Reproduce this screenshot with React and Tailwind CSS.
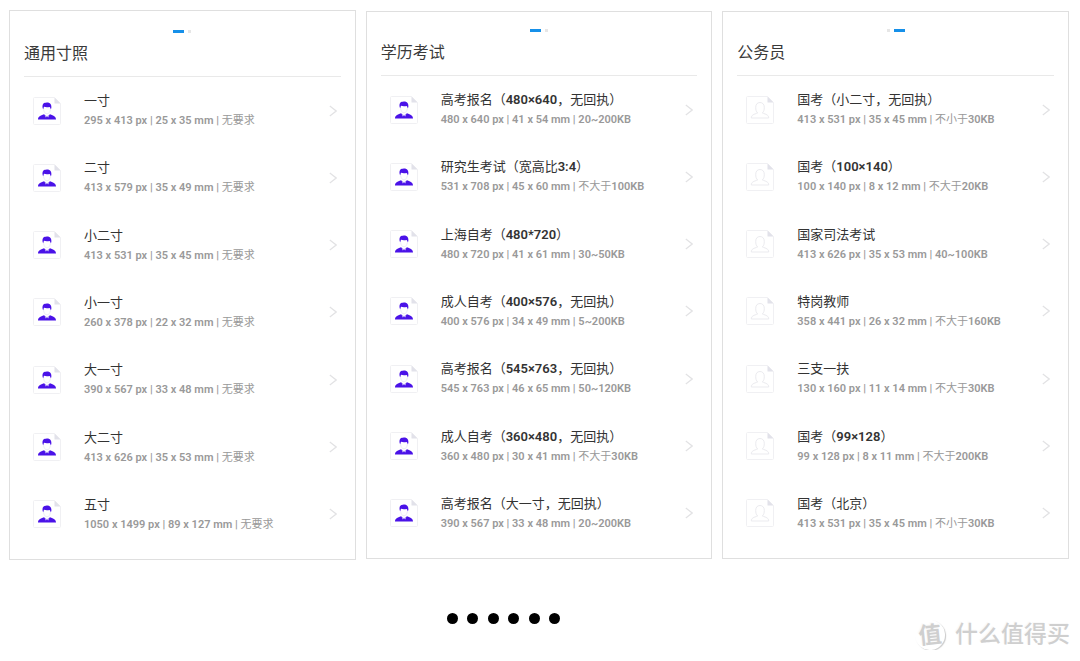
const GENERAL = [
  ["一寸", "295 x 413 px | 25 x 35 mm | 无要求"],
  ["二寸", "413 x 579 px | 35 x 49 mm | 无要求"],
  ["小二寸", "413 x 531 px | 35 x 45 mm | 无要求"],
  ["小一寸", "260 x 378 px | 22 x 32 mm | 无要求"],
  ["大一寸", "390 x 567 px | 33 x 48 mm | 无要求"],
  ["大二寸", "413 x 626 px | 35 x 53 mm | 无要求"],
  ["五寸", "1050 x 1499 px | 89 x 127 mm | 无要求"],
];

const EDUCATION = [
  ["高考报名（480×640，无回执）", "480 x 640 px | 41 x 54 mm | 20~200KB"],
  ["研究生考试（宽高比3:4）", "531 x 708 px | 45 x 60 mm | 不大于100KB"],
  ["上海自考（480*720）", "480 x 720 px | 41 x 61 mm | 30~50KB"],
  ["成人自考（400×576，无回执）", "400 x 576 px | 34 x 49 mm | 5~200KB"],
  ["高考报名（545×763，无回执）", "545 x 763 px | 46 x 65 mm | 50~120KB"],
  ["成人自考（360×480，无回执）", "360 x 480 px | 30 x 41 mm | 不大于30KB"],
  ["高考报名（大一寸，无回执）", "390 x 567 px | 33 x 48 mm | 20~200KB"],
];

const CIVIL = [
  ["国考（小二寸，无回执）", "413 x 531 px | 35 x 45 mm | 不小于30KB"],
  ["国考（100×140）", "100 x 140 px | 8 x 12 mm | 不大于20KB"],
  ["国家司法考试", "413 x 626 px | 35 x 53 mm | 40~100KB"],
  ["特岗教师", "358 x 441 px | 26 x 32 mm | 不大于160KB"],
  ["三支一扶", "130 x 160 px | 11 x 14 mm | 不大于30KB"],
  ["国考（99×128）", "99 x 128 px | 8 x 11 mm | 不大于200KB"],
  ["国考（北京）", "413 x 531 px | 35 x 45 mm | 不小于30KB"],
];

// Latin letters and figures are heavier than the Chinese text around them.
function Mixed({ text, weight }) {
  return text
    .split(/([0-9A-Za-z×:*~|]+)/)
    .map((part, i) => (i % 2 ? <span key={i} className={weight}>{part}</span> : part));
}

function PhotoIcon({ filled }) {
  return (
    <svg viewBox="0 0 28 28" className="size-7 shrink-0" fill="none" aria-hidden="true">
      <path d="M1.5 .5H21.5L27.5 6.5V26.5Q27.5 27.5 26.5 27.5H1.5Q.5 27.5 .5 26.5V1.5Q.5 .5 1.5 .5Z" stroke="#f0f0f3" />
      <path d="M21.5 .5L27.5 6.5H21.5Z" fill="#e2e2ea" />
      {filled ? (
        <>
          <path d="M9.7 11.2C9 7.6 10.2 5.6 13 5.7C16.2 4.9 19 7 18.3 11.2L17.6 12.4C17.6 11 17.3 10.4 16.6 9.9C14.4 10.3 12.4 10.2 11.2 9.8C10.6 10.4 10.5 11.2 10.4 12.4Z" fill="#4a12e8" />
          <path d="M5 22.5C5 19.4 7.4 18.6 11 17.2L14 19.6L17 17.2C20.6 18.6 23 19.4 23 22.5Z" fill="#4a12e8" />
          <path d="M11.4 17.2L14 19.4L12.7 20.6ZM16.6 17.2L14 19.4L15.3 20.6Z" fill="#c9bdf5" />
          <path d="M10.6 12.5C10.9 15 12.2 16.8 14 16.8C15.8 16.8 17.1 15 17.4 12.5" stroke="#e4e4f2" strokeWidth=".7" />
        </>
      ) : (
        <path d="M5.3 22C5.3 19 7.8 18.3 11.7 17C10.2 15.7 9.7 13.8 9.7 11.4C9.7 8.4 11.3 6.5 14 6.5S18.3 8.4 18.3 11.4C18.3 13.8 17.8 15.7 16.3 17C20.2 18.3 22.7 19 22.7 22Z" stroke="#ebebef" />
      )}
    </svg>
  );
}

function Chevron() {
  return (
    <svg viewBox="0 0 8 12" className="h-3 w-2 shrink-0" fill="none" stroke="#e2e2e4" strokeWidth="1.2" aria-hidden="true">
      <path d="M.8 1L7.2 6L.8 11" />
    </svg>
  );
}

function Panel({ title, items, filled, second, className }) {
  return (
    <section className={`border border-[#dfdfdf] px-3.5 pb-[11px] ${className}`}>
      <div className="flex justify-center gap-1" aria-hidden="true">
        <span className={second ? "h-[3px] w-[3px] bg-[#e6e6e6]" : "h-[3px] w-[11px] bg-[#1690e9]"} />
        <span className={second ? "h-[3px] w-[11px] bg-[#1690e9]" : "h-[3px] w-[3px] bg-[#e6e6e6]"} />
      </div>
      <h2 className="mt-[9px] border-b border-[#e9e9e9] pb-2.5 text-[16px] leading-6 text-[#3a3a3a]">{title}</h2>
      <ul className="grid h-[471px] auto-rows-fr">
        {items.map(([name, detail]) => (
          <li key={name} className="flex">
            <a href="#" className="flex flex-1 items-center pr-1 pl-[9px]">
              <PhotoIcon filled={filled} />
              <span className="ml-[23px] flex-1 pt-px whitespace-nowrap">
                <span className="block text-[13px] leading-5 text-[#333]"><Mixed text={name} weight="font-semibold" /></span>
                <span className="block text-[11px] leading-5 text-[#999]"><Mixed text={detail} weight="font-semibold" /></span>
              </span>
              <Chevron />
            </a>
          </li>
        ))}
      </ul>
    </section>
  );
}

export default function App() {
  return (
    <div className="bg-white pt-2.5 font-['Roboto','Noto_Sans_CJK_SC',sans-serif]">
      <main className="grid grid-cols-3 items-start gap-2.5 pr-[11px] pl-[9px]">
        <Panel title="通用寸照" items={GENERAL} filled className="pt-[19px]" />
        <Panel title="学历考试" items={EDUCATION} filled className="mt-px pt-[17px]" />
        <Panel title="公务员" items={CIVIL} second className="mt-px pt-[17px]" />
      </main>
      <footer className="mt-[53px] flex items-start justify-between pr-2.5 pl-[447px]">
        <div className="flex w-[113px] justify-between" aria-hidden="true">
          {[0, 1, 2, 3, 4, 5].map((n) => (
            <span key={n} className="size-[11px] rounded-full bg-black" />
          ))}
        </div>
        <div className="mt-[7px] flex items-center gap-2.5 text-[#cfcfcf] [text-shadow:-1px_-1px_0_#fafafa]">
          <span className="flex size-[30px] -rotate-6 items-center justify-center rounded-full text-[23px] leading-none font-bold shadow-[1px_1px_1px_#ccc]">值</span>
          <span className="text-[23px] leading-[30px] font-medium">什么值得买</span>
        </div>
      </footer>
    </div>
  );
}
